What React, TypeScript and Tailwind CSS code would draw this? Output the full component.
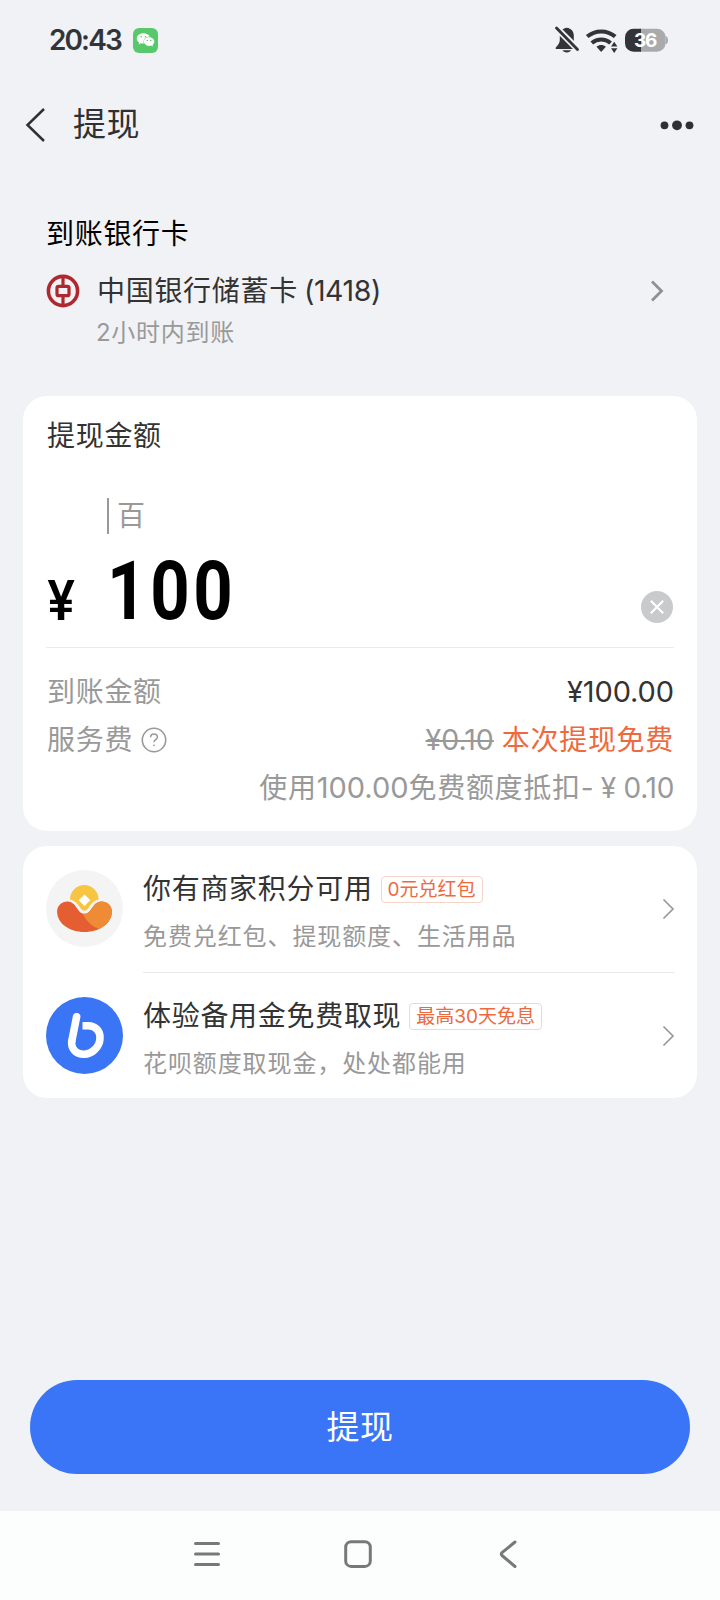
import type { ReactNode } from "react";

const FONT = "font-['Inter','Noto_Sans_CJK_SC',sans-serif]";

function StatusBar() {
  return (
    <div className="flex h-20 items-center justify-between pl-[49px] pr-[52px] text-[#333438]">
      <div className="flex items-center">
        <span className="w-[84px] text-[28px] leading-8 font-semibold tracking-[-1.9px]">20:43</span>
        <svg width="25" height="25" viewBox="0 0 25 25">
          <rect width="25" height="25" rx="6" fill="#58c96b" />
          <path
            d="M10.3 5.200c-3.600 0-6.500 2.300-6.500 5.200 0 1.600.9 3 2.300 4l-.5 2 2.300-1.200c.8.2 1.500.4 2.400.4h.5c-1-3.800 2-7 6-7-.6-2-3.200-3.400-6.500-3.400z"
            fill="#fff"
          />
          <path
            d="M16.100 9.300c-2.900 0-5.200 1.900-5.200 4.300s2.300 4.300 5.200 4.300c.7 0 1.300-.1 1.900-.3l1.900 1-.4-1.700c1.100-.8 1.800-2 1.800-3.300 0-2.400-2.300-4.300-5.200-4.300z"
            fill="#fff"
          />
          <circle cx="8.100" cy="8.800" r=".8" fill="#58c96b" />
          <circle cx="12.400" cy="8.800" r=".8" fill="#58c96b" />
          <circle cx="14.300" cy="12.400" r=".7" fill="#58c96b" />
          <circle cx="17.800" cy="12.400" r=".7" fill="#58c96b" />
        </svg>
      </div>
      <svg width="114" height="28" viewBox="0 0 114 28">
        <path
          d="M12.800 1.800c-4.600.6-7 3.800-7 7.700v4.500c0 2.500-1.200 4.400-3.800 7.200-.8.900-.4 1.800.7 1.800h20.200c1.100 0 1.500-.9.700-1.800-2.600-2.800-3.800-4.700-3.800-7.200V9.500c0-3.900-2.400-7.100-7-7.700z"
          fill="currentColor"
        />
        <path d="M8.500 24.300h8.600c-.8 1.400-2.200 2.100-4.300 2.100s-3.500-.7-4.300-2.100z" fill="currentColor" />
        <path d="M2.500 2 24 23.500" stroke="#f1f2f6" strokeWidth="6.500" />
        <path d="M0 0h9L4 10z" fill="#f1f2f6" />
        <path d="M2.500 2 23.500 23.500" stroke="currentColor" strokeWidth="2.800" strokeLinecap="round" />
        <g fill="none" stroke="currentColor" strokeWidth="4">
          <path d="M33.200 10.600c8-6.900 20-6.900 28 0" />
          <path d="M37.800 17c5.400-4.700 13.400-4.700 18.800 0" />
        </g>
        <path d="M42.500 20.800c2.700-2.400 6.700-2.400 9.400 0L47.200 26z" fill="currentColor" />
        <path d="M57 20.500h6.400l-3.200-4.700zM57 22.200h6.400l-3.200 4.700z" fill="currentColor" />
        <path d="M86 2.700h17a8.500 8.500 0 0 1 8.500 8v6.600a8.500 8.500 0 0 1-8.500 8.500H86z" fill="#a9aaac" />
        <path d="M111.500 10q2.500.8 2.500 4.200t-2.500 4.200z" fill="#a9aaac" />
        <path d="M79.500 2.700H87v23.100h-7.500a8.500 8.500 0 0 1-8.500-8.500v-6.100a8.500 8.500 0 0 1 8.500-8.500z" fill="#333438" />
        <text x="91" y="21.200" textAnchor="middle" fontSize="19" fontWeight="700" fill="#fff" letterSpacing="-1.300">
          36
        </text>
      </svg>
    </div>
  );
}

function Header() {
  return (
    <div className="flex h-[90px] items-center pr-[26px] pl-[24px] text-[#2f3033]">
      <svg width="22" height="36" viewBox="0 0 22 36" fill="none" stroke="currentColor" strokeWidth="2.500">
        <path d="M20 2 3.500 18 20 34" />
      </svg>
      <span className="mb-[3px] ml-[27px] flex-1 text-[33px] leading-[44px] tracking-[0.5px]">提现</span>
      <svg width="34" height="12" viewBox="0 0 34 12" fill="currentColor">
        <circle cx="4.500" cy="6.300" r="3.900" />
        <circle cx="17" cy="6.300" r="4.900" />
        <circle cx="29.500" cy="6.300" r="3.900" />
      </svg>
    </div>
  );
}

function BankCard() {
  return (
    <section className="h-[226px] px-[46px] pt-[46px]">
      <h2 className="text-[28px] leading-9 tracking-[0.7px] text-black">到账银行卡</h2>
      <div className="mt-[19px] flex h-10 items-center text-[#333]">
        <svg width="34" height="34" viewBox="0 0 34 34" fill="none" stroke="#b0282f">
          <circle cx="17" cy="17" r="14.600" strokeWidth="3.600" />
          <rect x="11" y="12.300" width="12" height="9.400" rx="1.500" strokeWidth="3.200" />
          <path d="M17 2v10M17 22v10" strokeWidth="3.200" />
        </svg>
        <span className="ml-[17px] text-[28px] leading-10 tracking-[0.7px]">中国银行储蓄卡</span>
        <span className="ml-[6px] flex-1 text-[28.500px] leading-10 tracking-[-0.4px]">(1418)</span>
        <svg width="14" height="22" viewBox="0 0 14 22" fill="none" stroke="#8f9095" strokeWidth="2.800" className="mr-[10px]">
          <path d="m2 1.500 9.500 9.500L2 20.500" />
        </svg>
      </div>
      <p className="ml-[50px] text-[24px] leading-[44px] tracking-[0.7px] text-[#999]">2小时内到账</p>
    </section>
  );
}

function AmountCard() {
  return (
    <section className="mx-[23px] h-[435px] rounded-[24px] bg-white px-[23px] pt-[21px] text-[28px] tracking-[0.7px]">
      <h2 className="ml-px leading-[38px] text-[#333]">提现金额</h2>
      <div className="mt-[43px] ml-[61px] flex h-[36px] items-center border-l-2 border-[#999] pl-[8px] leading-[36px] text-[#999]">百</div>
      <div className="mt-[17px] flex h-[97px] border-b border-[#ebebeb] text-black">
        <span className="w-[61px] origin-left scale-x-[0.91] pt-[19px] pl-px text-[55px] leading-[60px] font-semibold">¥</span>
        <span className="origin-left scale-x-[0.85] font-['Roboto'] text-[81px] leading-[81px] font-bold tracking-[4.300px]">100</span>
        <svg width="32" height="32" viewBox="0 0 32 32" className="mt-[40px] mr-px ml-auto">
          <circle cx="16" cy="16" r="16" fill="#c9cacc" />
          <path d="m9.800 9.800 12.400 12.400M22.200 9.800 9.800 22.200" stroke="#fff" strokeWidth="2.200" />
        </svg>
      </div>
      <div className="mt-5 flex h-12 items-center justify-between">
        <span className="ml-px text-[#999]">到账金额</span>
        <span className="text-[29px] tracking-[-0.100px] text-[#333]">¥100.00</span>
      </div>
      <div className="flex h-12 items-center text-[#999]">
        <span className="ml-px">服务费</span>
        <svg width="26" height="26" viewBox="0 0 26 26" fill="none" stroke="#999" className="ml-[8px]">
          <circle cx="13" cy="13" r="11.700" strokeWidth="1.600" />
          <path d="M9.600 10.300c0-4.500 6.800-4.300 6.800-.4 0 2.600-3.400 2.700-3.400 5.300" strokeWidth="1.500" />
          <circle cx="13" cy="18.300" r=".5" fill="#999" />
        </svg>
        <span className="ml-auto text-[28.500px] tracking-[0px] line-through decoration-2">¥0.10</span>
        <span className="ml-[8px] text-[#ed6a3f]">本次提现免费</span>
      </div>
      <div className="flex h-12 items-center justify-end text-[#999]">
        <span>使用</span>
        <span className="text-[29px] tracking-[0px]">100.00</span>
        <span>免费额度抵扣</span>
        <span className="tracking-[-0.300px] whitespace-pre">- ¥ 0.10</span>
      </div>
    </section>
  );
}

function PointsLogo() {
  return (
    <svg width="77" height="77" viewBox="0 0 77 77" className="shrink-0">
      <circle cx="38.500" cy="38.500" r="38.500" fill="#f4f4f5" />
      <path
        d="M24 29.500c0-8.200 6.300-14.600 14.300-14.600S52.600 21.300 52.600 29.500c-5.200 1-8 5-10.300 8.800-2.300 3.200-5.500 3.200-7.800 0-2.500-3.800-5.300-7.800-10.500-8.800z"
        fill="#f8c543"
      />
      <path d="m38.500 25 5.300 5.300-5.300 5.300-5.300-5.300z" fill="#fff" stroke="#fff" strokeLinejoin="round" />
      <path
        d="M21.500 31.500c9.300 0 9.500 12.300 17 12.300s7.700-12.300 17-12.300c6 0 10.500 4.300 10.400 10.500C65.500 53.500 53.500 62 38.500 62S11.500 53.500 11.100 42c-.1-6.200 4.400-10.500 10.400-10.500z"
        fill="#e55e31"
      />
      <path
        d="M36.500 43.500q1 .3 2 .3c7.500 0 7.700-12.300 17-12.300 6 0 10.500 4.300 10.400 10.500-.3 7.500-5.300 13.600-13 17-7.400-2.700-13-8.500-16.400-15.500z"
        fill="#f08b35"
      />
    </svg>
  );
}

function BLogo() {
  return (
    <svg width="77" height="77" viewBox="0 0 77 77" className="shrink-0" fill="none" stroke="#fff" strokeWidth="7.600">
      <circle cx="38.500" cy="38.500" r="38.500" fill="#3975f4" stroke="none" />
      <path d="M30.600 19.800 25.900 43.500" strokeLinecap="round" />
      <path d="M36.500 28.800H42c7.600 0 12.500 5.200 12 12.700-.5 8.500-7.800 15.700-16 15.700-8.500 0-13.500-6-12.100-14.200" />
    </svg>
  );
}

function Offer(props: { logo: ReactNode; title: string; tag: string; note: string; divided?: boolean }) {
  return (
    <div className={`flex pl-[23px] ${props.divided ? "h-[127px]" : "h-[125px]"}`}>
      <div className="pt-6">{props.logo}</div>
      <div className={`mr-[23px] ml-5 flex flex-1 border-b ${props.divided ? "border-[#e8e8e8]" : "border-transparent"}`}>
        <div className="flex-1 pt-[19px]">
          <div className="flex h-[48px] items-center">
            <span className="text-[28px] leading-9 tracking-[0.700px] text-[#333]">{props.title}</span>
            <span className="ml-[8px] flex h-[27px] items-center rounded-[4px] border border-[#f6d5c8] px-[6px] text-[19px] leading-none whitespace-nowrap text-[#ed6a3f]">
              {props.tag}
            </span>
          </div>
          <p className="text-[24px] leading-[48px] tracking-[0.900px] text-[#999]">{props.note}</p>
        </div>
        <svg width="14" height="22" viewBox="0 0 14 22" fill="none" stroke="#999" strokeWidth="1.700" className="mt-[52px] -mr-px">
          <path d="m2.500 1.500 9.500 9.500-9.500 9.500" />
        </svg>
      </div>
    </div>
  );
}

function NavBar() {
  return (
    <nav className="flex h-[89px] items-center justify-center gap-[122px] bg-[#fcfdfd] pr-[4px] pb-[4px] text-[#77787a]">
      <svg width="28" height="28" viewBox="0 0 28 28" fill="none" stroke="currentColor" strokeWidth="3" strokeLinecap="round">
        <path d="M2.500 3.500h23M2.500 14h23M2.500 24.500h23" />
      </svg>
      <svg width="30" height="30" viewBox="0 0 30 30" fill="none" stroke="currentColor" strokeWidth="3">
        <rect x="2.700" y="2.800" width="24.600" height="24.600" rx="5.500" />
      </svg>
      <svg width="28" height="30" viewBox="0 0 28 30" fill="none" stroke="currentColor" strokeWidth="3" strokeLinecap="round" strokeLinejoin="round">
        <path d="M20 3 7 13.700q-1.500 1.400 0 2.800L20 27.500" />
      </svg>
    </nav>
  );
}

export default function App() {
  return (
    <div className={`flex h-[1600px] w-[720px] flex-col overflow-hidden bg-[#f1f2f6] ${FONT}`}>
      <StatusBar />
      <Header />
      <BankCard />
      <AmountCard />
      <section className="mx-[23px] mt-[15px] h-[252px] rounded-[24px] bg-white">
        <Offer logo={<PointsLogo />} title="你有商家积分可用" tag="0元兑红包" note="免费兑红包、提现额度、生活用品" divided />
        <Offer logo={<BLogo />} title="体验备用金免费取现" tag="最高30天免息" note="花呗额度取现金，处处都能用" />
      </section>
      <button className="mt-auto mr-[30px] mb-[37px] ml-[30px] h-[94px] shrink-0 rounded-full bg-[#3975f6] pt-[2px] text-[33px] tracking-[0.500px] text-white">提现</button>
      <NavBar />
    </div>
  );
}
